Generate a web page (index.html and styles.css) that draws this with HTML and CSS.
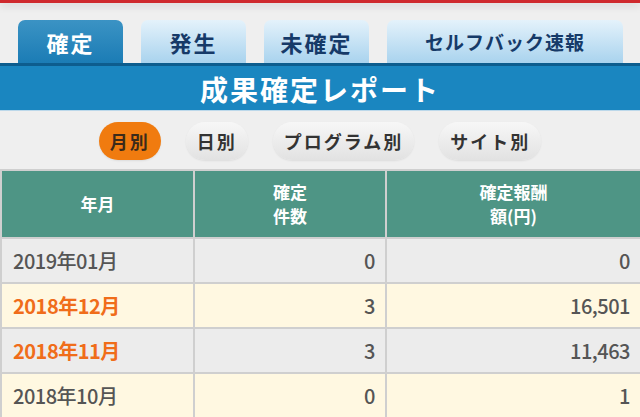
FILE: index.html
```html
<!DOCTYPE html>
<html lang="ja">
<head>
<meta charset="utf-8">
<link rel="stylesheet" href="styles.css">
</head>
<body>
<div class="topbar"></div>
<nav class="tabs">
  <div class="tab active">確定</div>
  <div class="tab">発生</div>
  <div class="tab">未確定</div>
  <div class="tab wide">セルフバック速報</div>
</nav>
<h1 class="band">成果確定レポート</h1>
<div class="filters">
  <span class="pill on">月別</span>
  <span class="pill">日別</span>
  <span class="pill">プログラム別</span>
  <span class="pill">サイト別</span>
</div>
<table class="report">
  <colgroup><col class="c1"><col class="c2"><col class="c3"></colgroup>
  <thead>
    <tr><th>年月</th><th>確定<br>件数</th><th>確定報酬<br>額(円)</th></tr>
  </thead>
  <tbody>
    <tr class="gray"><td class="month">2019年01月</td><td>0</td><td>0</td></tr>
    <tr class="cream"><td class="month hot">2018年12月</td><td>3</td><td>16,501</td></tr>
    <tr class="gray"><td class="month hot">2018年11月</td><td>3</td><td>11,463</td></tr>
    <tr class="cream"><td class="month">2018年10月</td><td>0</td><td>1</td></tr>
  </tbody>
</table>
</body>
</html>
```
FILE: styles.css
```css
html, body {
  margin: 0;
  padding: 0;
}
body {
  background: #efefef;
  font-family: "Noto Sans CJK JP", "Noto Sans", sans-serif;
  width: 640px;
  overflow: hidden;
}
.topbar {
  height: 3px;
  background: #cf2a2e;
  box-shadow: 0 2px 8px rgba(0,0,0,0.18);
}
.tabs {
  display: flex;
  gap: 18px;
  padding: 17px 0 0 18px;
  height: 43px;
}
.tab {
  width: 105px;
  height: 43px;
  border-radius: 7px 7px 0 0;
  background: linear-gradient(#e4f2fb, #a9d3ee);
  color: #163a68;
  font-weight: 700;
  font-size: 22px;
  line-height: 44px;
  text-align: center;
  letter-spacing: 2px;
}
.tab.wide {
  width: 236px;
  font-size: 19px;
  letter-spacing: 1px;
}
.tab.active {
  background: linear-gradient(#3b93c4, #1b7cb5);
  color: #fff;
}
.band {
  margin: 0;
  border-top: 3px solid #0d5d8e;
  border-bottom: 1px solid #bcd8ea;
  background: #1a86c0;
  color: #fff;
  height: 44px;
  line-height: 46px;
  text-align: center;
  font-size: 28px;
  font-weight: 700;
  letter-spacing: 2px;
}
.filters {
  display: flex;
  justify-content: center;
  gap: 25px;
  padding: 11px 0 9px 0;
}
.pill {
  display: inline-block;
  height: 38px;
  line-height: 38px;
  padding: 0 11px;
  border-radius: 19px;
  background: linear-gradient(#f7f7f7, #e2e2e2);
  color: #333;
  font-weight: 700;
  font-size: 18px;
  letter-spacing: 2px;
  box-shadow: 0 1px 2px rgba(0,0,0,0.08);
}
.pill.on {
  background: #f07b0f;
  color: #3a2a1a;
}
.report {
  width: 640px;
  border-collapse: collapse;
  table-layout: fixed;
  border-top: 2px solid #d2d2d2;
}
.c1 { width: 193px; }
.c2 { width: 192px; }
.c3 { width: 255px; }
.report th, .report td {
  border: 2px solid #cfcfcf;
}
.report th {
  background: #4e9585;
  color: #fff;
  font-size: 17px;
  font-weight: 700;
  line-height: 24px;
  height: 66px;
  padding: 0;
}
.report td {
  height: 43px;
  padding: 0 10px;
  text-align: right;
  color: #555;
  font-size: 20px;
  font-weight: 500;
  letter-spacing: -0.5px;
}
.report td.month {
  text-align: left;
  padding-left: 11px;
}
.report td.hot {
  color: #f06d1a;
  font-weight: 700;
}
.gray td { background: #ececec; }
.cream td { background: #fff8e1; }
```
